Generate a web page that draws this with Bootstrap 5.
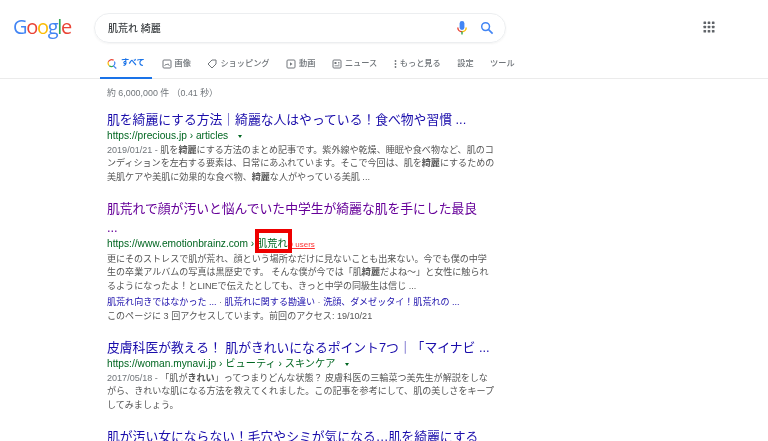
<!DOCTYPE html>
<html lang="ja">
<head>
    <meta charset="UTF-8">
    <title>肌荒れ 綺麗 - Google 検索</title>
    <link href="https://cdn.jsdelivr.net/npm/bootstrap@5.3.0/dist/css/bootstrap.min.css" rel="stylesheet">
    <style>
        html, body { height: 441px; overflow: hidden; }
        body { font-family: "Liberation Sans", "Noto Sans CJK JP", sans-serif; background: #fff; color: #4d5156; filter: blur(.35px); }
        .top-head { height: 54px; padding-top: 13px; }
        .g-logo { width: 94px; padding-left: 13px; font-family: "Open Sans", sans-serif; font-size: 20px; line-height: 28px; letter-spacing: -1.3px; }
        .search-pill { width: 412px; height: 30px; border-radius: 15px; border: 1px solid #eceef0; box-shadow: 0 1px 2px rgba(60,64,67,.06); padding: 0 11px 0 13px; font-size: 10px; font-weight: 500; color: #3c4043; }
        .apps-wrap { margin-left: 197px; }
        .tab-row { height: 25px; padding-left: 100px; border-bottom: 1px solid #ebebeb; font-size: 8.2px; font-weight: 500; color: #70757a; gap: 16.5px; }
        .tab-item { height: 25px; gap: 3px; padding-bottom: 5px; }
        .tab-item.on { color: #1a73e8; border-bottom: 2px solid #1a73e8; width: 52px; padding-left: 7px; padding-bottom: 4px; gap: 4px; margin-right: -7px; margin-bottom: -1px; font-weight: 700; }
        .results { padding-left: 107px; width: 505px; }
        .res-count { font-size: 8.9px; color: #70757a; line-height: 12px; margin-top: 8px; margin-bottom: 11px; }
        .res-block { margin-bottom: 15px; }
        .res-title { font-size: 12.8px; line-height: 19px; color: #1a0dab; text-decoration: none; display: block; white-space: nowrap; }
        .res-title.seen { color: #609; }
        .res-url { font-size: 10.2px; line-height: 13px; margin-bottom: 1.5px; color: #006621; white-space: nowrap; position: relative; }
        .arrow-down { display: inline-block; width: 0; height: 0; border-left: 2.5px solid transparent; border-right: 2.5px solid transparent; border-top: 3px solid #006621; margin-left: 7px; vertical-align: 1px; }
        .res-text { font-size: 9.05px; line-height: 13.6px; color: #545454; white-space: nowrap; }
        .res-text .dt { color: #70757a; }
        .res-links { font-size: 9.05px; line-height: 16px; color: #1a0dab; white-space: nowrap; }
        .res-links .sep { color: #70757a; }
        .hatena { font-size: 8px; color: #f33; text-decoration: underline; margin-left: 1px; }
        .red-frame { position: absolute; left: 148px; top: -8px; width: 37px; height: 23.5px; border: 4px solid #ee0000; }
    </style>
</head>
<body>

    <!-- Search header -->
    <div class="top-head d-flex">
        <div class="g-logo"><span style="color:#4285f4">G</span><span style="color:#ea4335">o</span><span style="color:#fbbc05">o</span><span style="color:#4285f4">g</span><span style="color:#34a853">l</span><span style="color:#ea4335">e</span></div>
        <div class="search-pill d-flex align-items-center">
            <span class="flex-grow-1">肌荒れ 綺麗</span>
            <svg width="12" height="16" viewBox="0 0 12 16" class="me-2">
                <rect x="3.6" y="1" width="4.8" height="9" rx="2.4" fill="#4285f4"/>
                <path d="M1.8 7.5a4.2 4.2 0 0 0 4.2 4.2" fill="none" stroke="#ea4335" stroke-width="1.4"/>
                <path d="M10.2 7.5a4.2 4.2 0 0 1-4.2 4.2" fill="none" stroke="#fbbc05" stroke-width="1.4"/>
                <rect x="5.3" y="11.5" width="1.4" height="3" fill="#34a853"/>
            </svg>
            <svg width="14" height="14" viewBox="0 0 14 14" class="ms-1">
                <circle cx="5.6" cy="5.6" r="3.9" fill="none" stroke="#4285f4" stroke-width="1.5"/>
                <path d="M8.6 8.6l4 4" stroke="#4285f4" stroke-width="1.7"/>
            </svg>
        </div>
        <div class="apps-wrap pt-1">
            <svg width="12" height="12" viewBox="0 0 12 12" fill="#5f6368" class="d-block mt-1">
                <rect x="0.5" y="0.5" width="2.6" height="2.6" rx=".6"/><rect x="4.7" y="0.5" width="2.6" height="2.6" rx=".6"/><rect x="8.9" y="0.5" width="2.6" height="2.6" rx=".6"/>
                <rect x="0.5" y="4.7" width="2.6" height="2.6" rx=".6"/><rect x="4.7" y="4.7" width="2.6" height="2.6" rx=".6"/><rect x="8.9" y="4.7" width="2.6" height="2.6" rx=".6"/>
                <rect x="0.5" y="8.9" width="2.6" height="2.6" rx=".6"/><rect x="4.7" y="8.9" width="2.6" height="2.6" rx=".6"/><rect x="8.9" y="8.9" width="2.6" height="2.6" rx=".6"/>
            </svg>
        </div>
    </div>

    <!-- Tabs -->
    <div class="tab-row d-flex">
        <div class="tab-item on d-flex align-items-center">
            <svg width="10" height="10" viewBox="0 0 9 9">
                <path d="M6 1.2A3.2 3.2 0 0 0 1.2 2.6" fill="none" stroke="#ea4335" stroke-width="1.1"/>
                <path d="M1.2 2.6A3.2 3.2 0 0 0 2 6" fill="none" stroke="#fbbc05" stroke-width="1.1"/>
                <path d="M2 6A3.2 3.2 0 0 0 5.8 6.2" fill="none" stroke="#34a853" stroke-width="1.1"/>
                <path d="M6.6 2.2A3.2 3.2 0 0 1 5.8 6.2L8.4 8.6" fill="none" stroke="#4285f4" stroke-width="1.1"/>
            </svg>
            <span>すべて</span>
        </div>
        <div class="tab-item d-flex align-items-center">
            <svg width="10" height="10" viewBox="0 0 10 10" fill="none" stroke="#70757a"><rect x="1" y="1" width="8" height="8" rx="1"/><path d="M2.5 7l1.5-2 1 1 1-1.300 1.500 2.300" stroke-width=".8"/></svg>
            <span>画像</span>
        </div>
        <div class="tab-item d-flex align-items-center">
            <svg width="10" height="10" viewBox="0 0 10 10" fill="none" stroke="#70757a"><path d="M1 5l4-4h4v4l-4 4z"/></svg>
            <span>ショッピング</span>
        </div>
        <div class="tab-item d-flex align-items-center">
            <svg width="10" height="10" viewBox="0 0 10 10" fill="none" stroke="#70757a"><rect x="1" y="1" width="8" height="8" rx="1"/><path d="M4 3.200l2.500 1.800L4 6.800z" fill="#70757a" stroke="none"/></svg>
            <span>動画</span>
        </div>
        <div class="tab-item d-flex align-items-center">
            <svg width="10" height="10" viewBox="0 0 10 10" fill="none" stroke="#70757a"><rect x="1" y="1" width="8" height="8" rx="1"/><rect x="2.500" y="3" width="2" height="2" fill="#70757a" stroke="none"/><path d="M2.500 6.800h5M6 3.500h1.500M6 5h1.500" stroke-width=".8"/></svg>
            <span>ニュース</span>
        </div>
        <div class="tab-item d-flex align-items-center">
            <svg width="3" height="10" viewBox="0 0 3 10" fill="#70757a"><circle cx="1.500" cy="2" r=".9"/><circle cx="1.500" cy="5" r=".9"/><circle cx="1.500" cy="8" r=".9"/></svg>
            <span>もっと見る</span>
        </div>
        <div class="tab-item d-flex align-items-center"><span>設定</span></div>
        <div class="tab-item d-flex align-items-center"><span>ツール</span></div>
    </div>

    <!-- Results -->
    <div class="results">
        <div class="res-count">約 6,000,000 件 （0.41 秒）</div>

        <div class="res-block">
            <a class="res-title" href="#">肌を綺麗にする方法｜綺麗な人はやっている！食べ物や習慣 ...</a>
            <div class="res-url">https://precious.jp › articles <span class="arrow-down"></span></div>
            <div class="res-text"><span class="dt">2019/01/21 - </span>肌を<b>綺麗</b>にする方法のまとめ記事です。紫外線や乾燥、睡眠や食べ物など、肌のコ</div>
            <div class="res-text">ンディションを左右する要素は、日常にあふれています。そこで今回は、肌を<b>綺麗</b>にするための</div>
            <div class="res-text">美肌ケアや美肌に効果的な食べ物、<b>綺麗</b>な人がやっている美肌 ...</div>
        </div>

        <div class="res-block">
            <a class="res-title seen" href="#">肌荒れで顔が汚いと悩んでいた中学生が綺麗な肌を手にした最良</a>
            <a class="res-title seen" href="#">...</a>
            <div class="res-url">https://www.emotionbrainz.com › 肌荒れ<span class="hatena">9 users</span><span class="red-frame"></span></div>
            <div class="res-text">更にそのストレスで肌が荒れ、顔という場所なだけに見ないことも出来ない。今でも僕の中学</div>
            <div class="res-text">生の卒業アルバムの写真は黒歴史です。 そんな僕が今では「肌<b>綺麗</b>だよね〜」と女性に触られ</div>
            <div class="res-text">るようになったよ！とLINEで伝えたとしても、きっと中学の同級生は信じ ...</div>
            <div class="res-links">肌荒れ向きではなかった ... <span class="sep">·</span> 肌荒れに関する勘違い <span class="sep">·</span> 洗顔、ダメゼッタイ！肌荒れの ...</div>
            <div class="res-text">このページに 3 回アクセスしています。前回のアクセス: 19/10/21</div>
        </div>

        <div class="res-block">
            <a class="res-title" href="#">皮膚科医が教える！ 肌がきれいになるポイント7つ｜「マイナビ ...</a>
            <div class="res-url">https://woman.mynavi.jp › ビューティ › スキンケア <span class="arrow-down"></span></div>
            <div class="res-text"><span class="dt">2017/05/18 - </span>「肌が<b>きれい</b>」ってつまりどんな状態？ 皮膚科医の三輪菜つ美先生が解説をしな</div>
            <div class="res-text">がら、きれいな肌になる方法を教えてくれました。この記事を参考にして、肌の美しさをキープ</div>
            <div class="res-text">してみましょう。</div>
        </div>

        <div class="res-block">
            <a class="res-title" href="#">肌が汚い女にならない！毛穴やシミが気になる…肌を綺麗にする</a>
        </div>
    </div>

    <script src="https://cdn.jsdelivr.net/npm/bootstrap@5.3.0/dist/js/bootstrap.bundle.min.js"></script>
</body>
</html>
